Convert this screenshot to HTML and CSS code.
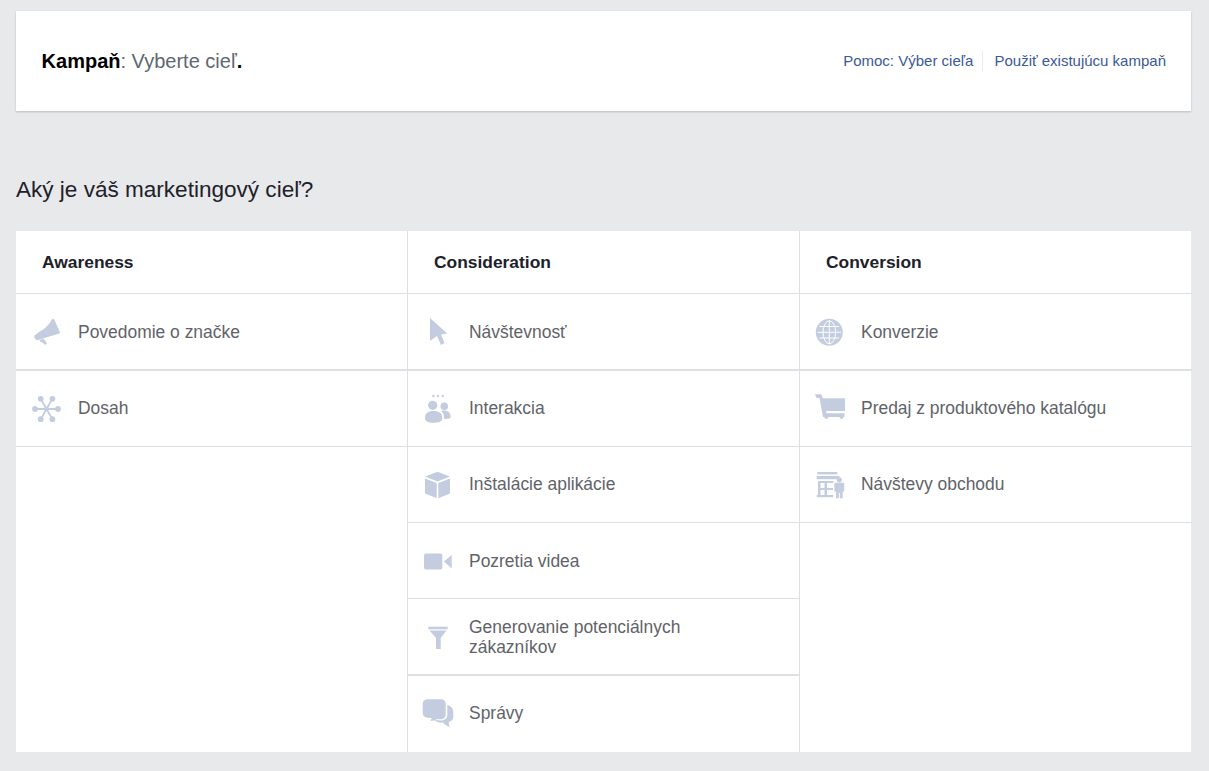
FILE: index.html
```html
<!DOCTYPE html>
<html lang="sk">
<head>
<meta charset="utf-8">
<title>Kampaň</title>
<link rel="stylesheet" href="styles.css">
</head>
<body>
<header class="card">
  <h1 class="title"><b>Kampaň</b><span class="muted">: Vyberte cieľ</span><b>.</b></h1>
  <nav class="links"><a href="#">Pomoc: Výber cieľa</a><a href="#">Použiť existujúcu kampaň</a></nav>
</header>
<h2 class="question">Aký je váš marketingový cieľ?</h2>
<main class="board">
  <section class="col first">
    <h3 class="col-head">Awareness</h3>
    <div class="row thick">
      <svg class="ico" viewBox="0 0 32 32"><path d="M21 3.3 C22 2.5 23 3 23.5 4 L28.8 16 C29.2 17 28.5 17.8 27.5 17.8 L7 24 C4 24.5 2.8 21 3.5 19.5 L8 16 C14 13 18 9 21 3.3Z"/><path d="M8.5 24 L12.5 22.8 L15.8 26.8 C16.5 28.3 14.5 29.2 13 28.3 L11.5 26.5 L9 25.5Z"/></svg>
      <span>Povedomie o značke</span>
    </div>
    <div class="row lift">
      <svg class="ico" viewBox="0 0 32 32"><g class="ln"><path d="M15.5 16 L9.7 5.8M15.5 16 L21.4 5.8M15.5 16 L9.7 26.2M15.5 16 L21.4 26.2M4 16 H27"/></g><circle cx="15.5" cy="16" r="2.2"/><circle cx="9.7" cy="5.8" r="2.9"/><circle cx="21.4" cy="5.8" r="2.9"/><circle cx="9.7" cy="26.2" r="2.9"/><circle cx="21.4" cy="26.2" r="2.9"/><circle cx="4" cy="16" r="2.9"/><circle cx="27" cy="16" r="2.9"/></svg>
      <span>Dosah</span>
    </div>
  </section>
  <section class="col">
    <h3 class="col-head">Consideration</h3>
    <div class="row thick">
      <svg class="ico" viewBox="0 0 32 32"><path d="M8 2 L25.3 17.5 L19 18.5 L22.5 27 L19 29 L15 20 L8 25Z"/></svg>
      <span>Návštevnosť</span>
    </div>
    <div class="row lift">
      <svg class="ico" viewBox="0 0 32 32"><circle cx="11.3" cy="3" r="1.2"/><circle cx="16" cy="3" r="1.2"/><circle cx="20.7" cy="3" r="1.2"/><circle cx="10.7" cy="12.3" r="4.6"/><circle cx="22.3" cy="13.3" r="3.8"/><path d="M3 25 C3 20 6 18 11.5 18 C17 18 20.3 20 20.3 25 C20.3 28.5 17 29.7 11.5 29.7 C6 29.7 3 28.5 3 25Z"/><path d="M19 18 C24.5 16.5 28.7 19 28.7 23.5 C28.7 25.3 27 26 22.2 26 C22.2 22.5 21.5 20 19 18Z"/></svg>
      <span>Interakcia</span>
    </div>
    <div class="row lift">
      <svg class="ico" viewBox="0 0 32 32"><path d="M15.5 2.7 L28 7.5 L15.5 12.5 L3 7.5Z"/><path d="M3 9.5 L14.7 14 V29.3 L3 24.5Z"/><path d="M28 9.5 L16.3 14 V29.3 L28 24.5Z"/></svg>
      <span>Inštalácie aplikácie</span>
    </div>
    <div class="row">
      <svg class="ico" viewBox="0 0 32 32"><rect x="2" y="8.5" width="18.3" height="16" rx="2"/><path d="M22 16.5 L29.7 10 V23.5Z"/></svg>
      <span>Pozretia videa</span>
    </div>
    <div class="row thick">
      <svg class="ico" viewBox="0 0 32 32"><rect x="6.3" y="5.7" width="19.4" height="2.6"/><path d="M7.5 9.5 H24.5 L18.7 17 V28 H14 V17Z"/></svg>
      <span>Generovanie potenciálnych<br>zákazníkov</span>
    </div>
    <div class="row lift">
      <svg class="ico" viewBox="0 0 32 32"><path d="M5.5 1.3 H19 C22 1.3 23.7 3.5 23.7 6 V16.5 C23.7 19.5 21.5 21.3 19 21.3 H14.5 C12.5 22.5 10.5 23 8.2 22.7 C9.3 21.7 9.7 21 9.7 20 L5.5 19.8 C2.5 19.5 .7 17.5 .7 15 V6 C.7 3.5 2.5 1.3 5.5 1.3Z"/><path d="M25.3 7 C29 8 31.3 10.5 31.3 14 V19 C31.3 21.5 29.5 23.7 26.8 23.7 C26.7 25.5 27 27 28 28.7 C25 28.3 22.5 26.5 21 24.5 C17.5 25 14 24 12 22 L19 22.5 C23 22.5 25.3 20 25.3 16.5Z"/></svg>
      <span>Správy</span>
    </div>
  </section>
  <section class="col">
    <h3 class="col-head">Conversion</h3>
    <div class="row thick">
      <svg class="ico" viewBox="0 0 32 32"><circle cx="15.3" cy="16.3" r="13.5"/><g class="ln-w"><ellipse cx="15.3" cy="16.3" rx="6.3" ry="11.5"/><path d="M15.3 4.5 V28.2M3.6 16.3 H27M5.5 10.5 H25M5.5 22 H25"/></g></svg>
      <span>Konverzie</span>
    </div>
    <div class="row lift">
      <svg class="ico" viewBox="0 0 32 32"><path d="M1 1.3 H7.5 L8.8 5.3 H31 V18 H12 L12.6 20.3 H30.5 V24 H29.5 C29 26.5 26 26.5 25.5 24 H14.5 C14 26.5 11 26.5 10.2 24 H9 L5.5 5 H2.5Z"/></svg>
      <span>Predaj z produktového katalógu</span>
    </div>
    <div class="row lift">
      <svg class="ico" viewBox="0 0 32 32"><rect x="3.3" y="3" width="20" height="2.4"/><rect x="2.7" y="7" width="22.6" height="3.2"/><path d="M4 12 H19.5 V14 H13 V19 H19 V21 H13 V26 H19 V28.2 H2.7 V26 H4Z M6.5 14 V19 H10.5 V14Z M6.5 21 V26 H10.5 V21Z" fill-rule="evenodd"/><circle cx="25.3" cy="10.8" r="2.6"/><path d="M20.3 15 C20.3 14 21.2 13.7 22 13.7 H28.5 C29.5 13.7 30.3 14 30.3 15 V22.5 H28.7 V29.3 H25.8 V24 H24.8 V29.3 H22 V22.5 H20.3Z"/></svg>
      <span>Návštevy obchodu</span>
    </div>
  </section>
</main>
</body>
</html>
```
FILE: styles.css
```css
* { box-sizing: border-box; }
html, body { height: 100%; }
body {
  margin: 0;
  padding: 11px 18px 0 16px;
  background: #e8e9eb;
  font-family: "Liberation Sans", Arial, sans-serif;
  color: #1d2129;
  overflow: hidden;
}
.card {
  height: 100px;
  background: #fff;
  display: flex;
  align-items: center;
  justify-content: space-between;
  padding: 0 25px 0 25.6px;
  box-shadow: 0 1px 2px rgba(0, 0, 0, .2);
}
.title { margin: 0; font-size: 20px; font-weight: 400; color: #000; }
.title b { font-weight: 700; }
.muted { color: #606770; }
.links { display: flex; font-size: 15px; }
.links a { color: #3b5998; text-decoration: none; line-height: 20px; }
.links a + a { margin-left: 9px; padding-left: 11px; border-left: 1px solid #e9ebee; }
.question {
  margin: 66px 0 0;
  height: 54px;
  font-size: 22.55px;
  line-height: 26px;
  font-weight: 400;
  color: #1d2129;
}
.board {
  display: grid;
  grid-template-columns: repeat(3, 392px);
  height: 521px;
  background: #fff;
  width: 1175px;
}
.col { border-right: 1px solid #dddfe2; }
.col:last-child { border-right: 0; }
.col-head {
  margin: 0;
  height: 63px;
  padding-left: 26px;
  font-size: 17.4px;
  line-height: 62px;
  font-weight: 700;
  color: #1d2129;
  border-bottom: 1px solid #dddfe2;
}
.row {
  height: 76px;
  display: flex;
  align-items: center;
  padding-left: 14px;
  font-size: 17.45px;
  line-height: 20px;
  color: #5f6369;
  border-bottom: 1px solid #dddfe2;
}
.first .row { padding-left: 15px; }
.row.thick { height: 77px; border-bottom-width: 2px; }
.col:nth-child(2) .row:last-child { border-bottom: 0; }
.row span { margin-left: 15px; }
.row.lift span { margin-bottom: 2px; }
.ico { width: 32px; height: 32px; flex: none; fill: #c4cde0; }
.ln path { stroke: #c4cde0; stroke-width: 1.8; fill: none; }
.ln-w ellipse, .ln-w path { stroke: #fff; stroke-width: 1; fill: none; }
```
